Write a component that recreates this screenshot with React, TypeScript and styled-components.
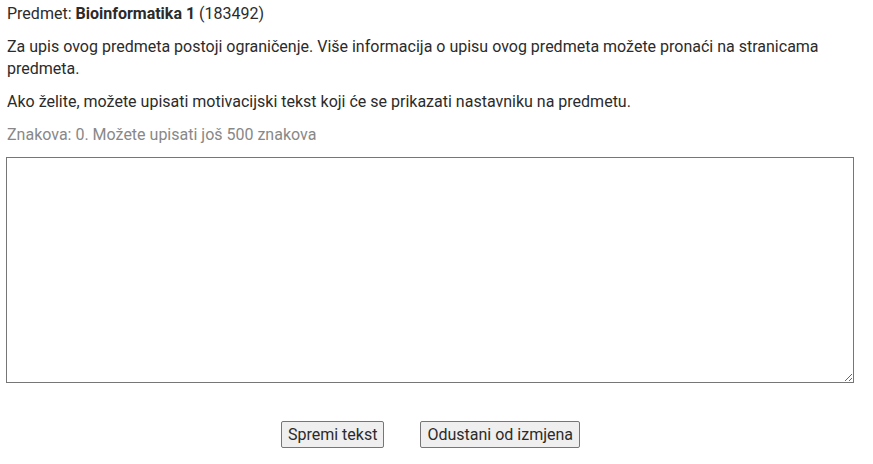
import styled, { createGlobalStyle } from 'styled-components'

const GlobalStyle = createGlobalStyle`
  body {
    margin: 0;
    background: #fff;
    font-family: Roboto, "Liberation Sans", sans-serif;
    font-size: 16px;
    color: #2b2b2b;
  }
`

const Page = styled.div`
  padding: 3px 19px 0 7px;
`

const Line = styled.p<{ $muted?: boolean }>`
  margin: 0 0 11px;
  line-height: 22px;
  color: ${({ $muted }) => ($muted ? '#888' : '#2b2b2b')};
`

const Form = styled.form`
  display: flex;
  flex-direction: column;
`

const TextArea = styled.textarea`
  box-sizing: border-box;
  width: 848px;
  height: 226px;
  margin: 0 0 0 -1px;
  border: 1px solid #767676;
  border-radius: 0;
  font-family: inherit;
  font-size: 16px;
`

const Actions = styled.div`
  display: flex;
  justify-content: center;
  gap: 36px;
  margin-top: 38px;
`

const Button = styled.button`
  box-sizing: border-box;
  height: 27px;
  padding: 0 6px;
  font-family: Roboto, "Liberation Sans", sans-serif;
  font-size: 16px;
  color: #2b2b2b;
  background: #efefef;
  border: 1px solid #767676;
  border-radius: 2px;
`

export default function App() {
  return (
    <>
      <GlobalStyle />
      <Page>
        <Line>
          Predmet: <b>Bioinformatika 1</b> (183492)
        </Line>
        <Line>
          Za upis ovog predmeta postoji ograničenje. Više informacija o upisu ovog predmeta možete
          pronaći na stranicama predmeta.
        </Line>
        <Line>Ako želite, možete upisati motivacijski tekst koji će se prikazati nastavniku na predmetu.</Line>
        <Line $muted>Znakova: 0. Možete upisati još 500 znakova</Line>
        <Form>
          <TextArea />
          <Actions>
            <Button type="button">Spremi tekst</Button>
            <Button type="button">Odustani od izmjena</Button>
          </Actions>
        </Form>
      </Page>
    </>
  )
}
